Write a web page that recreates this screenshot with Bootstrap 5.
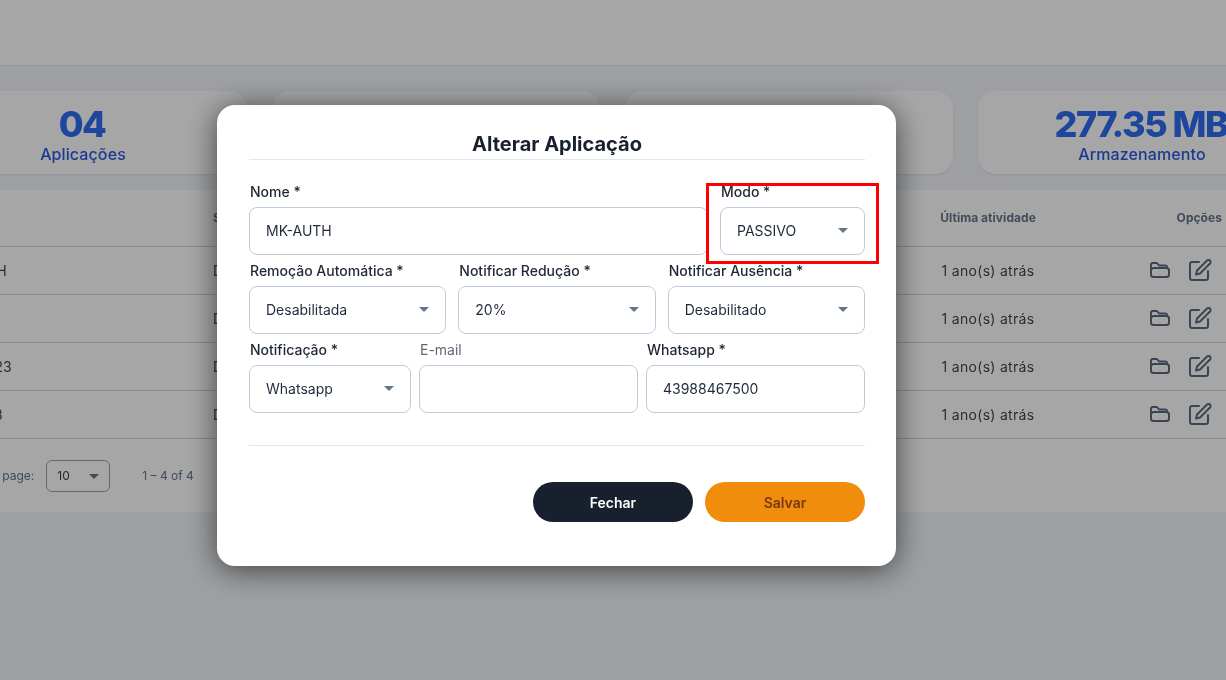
<!DOCTYPE html>
<html lang="pt-BR">
<head>
    <meta charset="UTF-8">
    <meta name="viewport" content="width=device-width, initial-scale=1.0">
    <title>Aplicações</title>
    <link href="https://cdn.jsdelivr.net/npm/bootstrap@5.3.0/dist/css/bootstrap.min.css" rel="stylesheet">
    <style>
        body { font-family: "Inter", "Liberation Sans", sans-serif; background: #f1f5f9; overflow: hidden; color: #1f2937; }
        .top-bar { height: 66px; background: #fff; border-bottom: 1px solid #e2e8f0; }
        .page-wrap { width: 1387px; margin-left: -81px; padding-top: 25px; will-change: opacity; }
        .stat-row { gap: 25px; margin-bottom: 16px; }
        .stat-box { flex: 1 1 0; height: 83px; background: #fff; border-radius: 18px; text-align: center; box-shadow: 0 1px 2px rgba(0,0,0,.08); }
        .stat-num { font-size: 36px; font-weight: 800; line-height: 38px; letter-spacing: -1.5px; padding-top: 14px; padding-right: 2px; color: #2e6cf0; white-space: nowrap; }
        .stat-label { font-size: 16px; font-weight: 500; line-height: 22px; letter-spacing: .1px; color: #2a5be0; }
        .list-box { background: #fff; height: 322px; }
        .app-table { table-layout: fixed; width: 1387px; margin: 0; }
        .app-table th { height: 56px; font-size: 12px; font-weight: 700; letter-spacing: .05px; color: #64748b; vertical-align: middle; border-bottom: 1px solid #cbd5e1; padding: 0; }
        .app-table td { height: 48px; font-size: 14px; color: #3f4652; vertical-align: middle; border-bottom: 1px solid #cbd5e1; padding: 0; }
        .app-table .first-col { width: 294px; padding-left: 22px; }
        .app-table .act-col { width: 150px; text-align: center; }
        .app-table td.act-col { letter-spacing: .3px; }
        .app-table .opt-col { width: 243px; text-align: right; padding-right: 84px; }
        .row-icons { gap: 17px; margin-right: 10px; }
        .row-icons svg { color: #5a6a80; display: block; }
        .pager { height: 75px; font-size: 12px; color: #64748b; }
        .pager-label { margin-left: 27px; }
        .pager-select { width: 64px; height: 32px; margin-left: 12px; margin-right: 32px; border: 1px solid #94a3b8; border-radius: 6px; padding: 0 10px; color: #3f4652; }
        .pager-caret { width: 0; height: 0; border-left: 5px solid transparent; border-right: 5px solid transparent; border-top: 5px solid #64748b; }
        .modal-backdrop { --bs-backdrop-opacity: .35; }
        .edit-dialog { --bs-modal-width: 679px; max-width: 679px; margin: 105px 0 0 217px; }
        .edit-card { border: 0; border-radius: 18px; height: 461px; padding: 26px 31px 0 32px; box-shadow: 0 4px 30px rgba(0,0,0,.6); }
        .edit-title { font-size: 20px; font-weight: 700; line-height: 27px; text-align: center; color: #18202e; margin: 0 0 1px; }
        .edit-rule { border: 0; border-top: 1px solid #e2e6ef; opacity: 1; margin: 0; }
        .edit-form { margin-top: 21px; margin-bottom: 32px; }
        .field-row { gap: 12px; margin-bottom: 5px; }
        .field-row.tight { gap: 8px; }
        .field-label { display: block; font-size: 14px; font-weight: 500; line-height: 21px; margin: 0 0 5px 1px; color: #1e2734; }
        .field-label.muted { font-weight: 400; color: #5f6875; }
        .form-control, .form-select { height: 48px; font-size: 14px; color: #1f2a3c; border-color: #c1cadb; border-radius: 8px; padding: 0 16px 1px; }
        .form-select { background-image: url("data:image/svg+xml,%3csvg xmlns='http://www.w3.org/2000/svg' viewBox='0 0 10 5'%3e%3cpath fill='%2364748b' d='M0 0h10L5 5z'/%3e%3c/svg%3e"); background-size: 10px 5px; background-position: right 16px top 20px; }
        .w-notif { flex: 0 0 162px; }
        .w-modo { flex: 0 0 145px; }
        .edit-foot { gap: 12px; margin-top: 36px; }
        .edit-btn { width: 160px; height: 40px; border: 0; border-radius: 20px; font-size: 14px; font-weight: 600; padding: 0; }
        .btn-close-form { background: #18202e; color: #fff; }
        .btn-save-form { background: #f18d0c; color: #7a3610; }
        .mode-flag { position: fixed; left: 706px; top: 183px; width: 173px; height: 81px; border: 3px solid #f00; z-index: 2000; pointer-events: none; }
    </style>
</head>
<body>

<!-- Page behind the modal -->
<div class="top-bar"></div>
<div class="page-wrap">
    <div class="d-flex stat-row">
        <div class="stat-box"><div class="stat-num">04</div><div class="stat-label">Aplicações</div></div>
        <div class="stat-box"></div>
        <div class="stat-box"></div>
        <div class="stat-box"><div class="stat-num">277.35 MB</div><div class="stat-label">Armazenamento</div></div>
    </div>

    <div class="list-box">
        <table class="table app-table">
            <thead>
            <tr>
                <th class="first-col"></th>
                <th>S</th>
                <th class="act-col">Última atividade</th>
                <th class="opt-col">Opções</th>
            </tr>
            </thead>
            <tbody id="appRows"></tbody>
        </table>
        <div class="d-flex align-items-center pager">
            <span class="pager-label">Rows per page:</span>
            <div class="d-flex align-items-center justify-content-between pager-select"><span>10</span><span class="pager-caret"></span></div>
            <span>1 – 4 of 4</span>
        </div>
    </div>
</div>

<!-- Edit modal -->
<div class="modal-backdrop show"></div>
<div class="modal d-block">
    <div class="modal-dialog edit-dialog">
        <div class="modal-content edit-card">
            <h5 class="edit-title">Alterar Aplicação</h5>
            <hr class="edit-rule">
            <form class="edit-form">
                <div class="d-flex field-row">
                    <div class="flex-fill">
                        <label class="field-label">Nome *</label>
                        <input class="form-control" value="MK-AUTH">
                    </div>
                    <div class="w-modo">
                        <label class="field-label">Modo *</label>
                        <select class="form-select"><option>PASSIVO</option></select>
                    </div>
                </div>
                <div class="row g-0 field-row flex-nowrap">
                    <div class="col">
                        <label class="field-label">Remoção Automática *</label>
                        <select class="form-select"><option>Desabilitada</option></select>
                    </div>
                    <div class="col">
                        <label class="field-label">Notificar Redução *</label>
                        <select class="form-select"><option>20%</option></select>
                    </div>
                    <div class="col">
                        <label class="field-label">Notificar Ausência *</label>
                        <select class="form-select"><option>Desabilitado</option></select>
                    </div>
                </div>
                <div class="d-flex field-row tight mb-0">
                    <div class="w-notif">
                        <label class="field-label">Notificação *</label>
                        <select class="form-select"><option>Whatsapp</option></select>
                    </div>
                    <div class="flex-fill w-25">
                        <label class="field-label muted">E-mail</label>
                        <input class="form-control">
                    </div>
                    <div class="flex-fill w-25">
                        <label class="field-label">Whatsapp *</label>
                        <input class="form-control" value="43988467500">
                    </div>
                </div>
            </form>
            <hr class="edit-rule">
            <div class="d-flex justify-content-end edit-foot">
                <button type="button" class="edit-btn btn-close-form">Fechar</button>
                <button type="button" class="edit-btn btn-save-form">Salvar</button>
            </div>
        </div>
    </div>
</div>
<div class="mode-flag"></div>

<script>
    const apps = ['MK-AUTH', 'MK-02', 'MKT-2023', 'MK-TST3'];
    const rowIcons = `
        <div class="d-flex justify-content-end align-items-center row-icons">
            <svg width="22" height="20" viewBox="0 0 22 20" fill="none" stroke="currentColor" stroke-width="2" stroke-linejoin="round"><path d="M2 15V5a2 2 0 0 1 2-2h4l2 2.500h6a2 2 0 0 1 2 2"/><rect x="2" y="8" width="18" height="9" rx="2.500"/></svg>
            <svg width="24" height="24" viewBox="0 0 24 24" fill="none" stroke="currentColor" stroke-width="2" stroke-linecap="round" stroke-linejoin="round"><path d="M11 4H4a2 2 0 0 0-2 2v14a2 2 0 0 0 2 2h14a2 2 0 0 0 2-2v-7"/><path d="M19 2.500a2.100 2.100 0 0 1 3 3L12 15.500l-4 1 1-4z"/></svg>
        </div>`;
    document.getElementById('appRows').innerHTML = apps.map(name => `
        <tr>
            <td class="first-col">${name}</td>
            <td>D</td>
            <td class="act-col">1 ano(s) atrás</td>
            <td class="opt-col">${rowIcons}</td>
        </tr>`).join('');
</script>
</body>
</html>
